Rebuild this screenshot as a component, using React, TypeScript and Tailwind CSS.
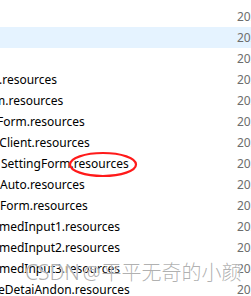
import React from "react";

type Row = { name: string; shift: string; hover?: boolean };

const rows: Row[] = [
    { name: "", shift: "" },
    { name: "", shift: "", hover: true },
    { name: "", shift: "" },
    { name: ".resources", shift: "-ml-[1px]" },
    { name: "m.resources", shift: "-ml-[6px]" },
    { name: "Form.resources", shift: "-ml-[3px]" },
    { name: "tClient.resources", shift: "-ml-[5px]" },
    { name: "SettingForm.resources", shift: "ml-[1px]" },
    { name: "Auto.resources", shift: "ml-0" },
    { name: "Form.resources", shift: "ml-0" },
    { name: "medInput1.resources", shift: "-ml-[1px]" },
    { name: "medInput2.resources", shift: "-ml-[1px]" },
    { name: "medInput3.resources", shift: "-ml-[1px]" },
    { name: "eDetaiAndon.resources", shift: "-ml-[2px]" },
];

const App: React.FC = () => {
    return (
        <div className="relative w-[251px] h-[296px] overflow-hidden bg-white font-['Noto_Sans',sans-serif] text-[12px]">
            <div className="flex flex-col pt-[6px]">
                {rows.map((row, i) => (
                    <div
                        key={i}
                        className={`flex items-center h-[21px] ${row.hover ? "bg-[#e5f3ff]" : ""}`}
                    >
                        <div className="w-[237px] shrink-0 overflow-hidden whitespace-nowrap text-black">
                            <span className={`inline-block ${row.shift}`}>{row.name}</span>
                        </div>
                        <div className="shrink-0 whitespace-nowrap text-[#6d6d6d]">2022/3/1 10:00</div>
                    </div>
                ))}
            </div>

            {/* red circle drawn over the screenshot */}
            <svg className="absolute left-[68px] top-[151px]" width="70" height="28" viewBox="0 0 70 28">
                <ellipse cx="35" cy="13.5" rx="33" ry="11.5" fill="none" stroke="#ff1a1a" strokeWidth="2.2" />
            </svg>

            <div className="absolute left-[25px] top-[262px] flex items-baseline whitespace-nowrap leading-none text-[rgba(110,110,110,0.55)] font-light [text-shadow:0_0_1px_#fff,0_0_1px_#fff]">
                <span className="text-[21px] font-['Noto_Sans',sans-serif]">CSDN</span>
                <span className="ml-[3px] text-[20px] font-['Noto_Sans',sans-serif]">@</span>
                <span className="ml-[1px] text-[20px] font-['Noto_Sans_CJK_SC',sans-serif]">平平无奇的小颜</span>
            </div>
        </div>
    );
};

export default App;
